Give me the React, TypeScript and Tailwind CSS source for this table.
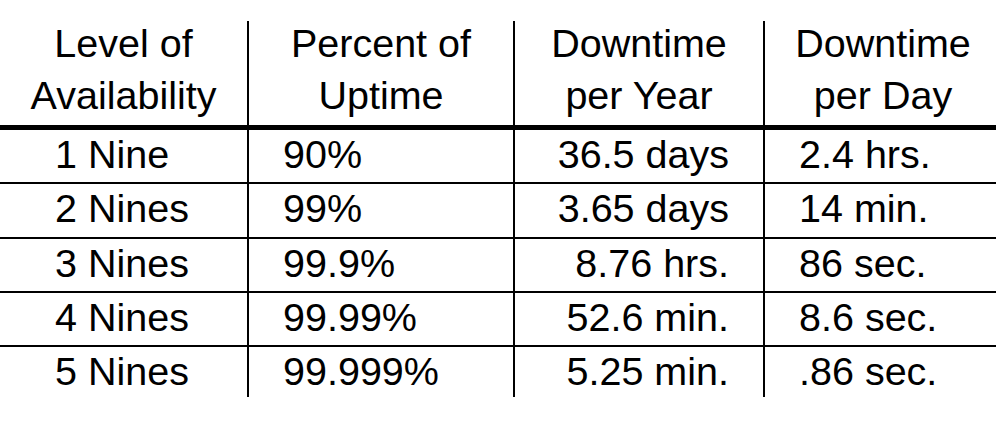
import React from "react";

const rows: [string, string, string, string][] = [
  ["1 Nine", "90%", "36.5 days", "2.4 hrs."],
  ["2 Nines", "99%", "3.65 days", "14 min."],
  ["3 Nines", "99.9%", "8.76 hrs.", "86 sec."],
  ["4 Nines", "99.99%", "52.6 min.", "8.6 sec."],
  ["5 Nines", "99.999%", "5.25 min.", ".86 sec."],
];

const heights = ["h-[52px]", "h-[53px]", "h-[52px]", "h-[52px]", "h-[50px]"];

export default function App() {
  return (
    <div
      className="w-[996px] h-[422px] bg-white text-black pt-[21px] text-[39.5px]"
      style={{ fontFamily: '"Liberation Sans", Arial, sans-serif' }}
    >
      {/* header */}
      <div className="grid grid-cols-[247px_266px_250px_1fr]">
        <div className="h-[104px] text-center">
          <div className="-mt-[4px] leading-[52px]">
            Level of
            <br />
            Availability
          </div>
        </div>
        <div className="h-[104px] text-center border-l-2 border-black">
          <div className="-mt-[4px] leading-[52px]">
            Percent of
            <br />
            Uptime
          </div>
        </div>
        <div className="h-[104px] text-center border-l-2 border-black">
          <div className="-mt-[4px] leading-[52px]">
            Downtime
            <br />
            per Year
          </div>
        </div>
        <div className="h-[104px] text-center border-l-2 border-black pl-[5px]">
          <div className="-mt-[4px] leading-[52px]">
            Downtime
            <br />
            per Day
          </div>
        </div>
      </div>
      <div className="grid grid-cols-[247px_266px_250px_1fr]">
        <div className="h-[5px] bg-black" />
        <div className="h-[5px] bg-black" />
        <div className="h-[5px] bg-black" />
        <div className="h-[5px] bg-black" />
      </div>
      {rows.map((r, i) => (
        <div
          key={i}
          className={`grid grid-cols-[247px_266px_250px_1fr] ${
            i < rows.length - 1 ? "border-b-2 border-black" : ""
          }`}
        >
          <div className={`${heights[i]} pl-[55px] leading-[48px] whitespace-nowrap`}>{r[0]}</div>
          <div className={`${heights[i]} pl-[34px] leading-[48px] border-l-2 border-black whitespace-nowrap`}>
            {r[1]}
          </div>
          <div className={`${heights[i]} pr-[34px] text-right leading-[48px] border-l-2 border-black whitespace-nowrap`}>
            {r[2]}
          </div>
          <div className={`${heights[i]} pl-[34px] leading-[48px] border-l-2 border-black whitespace-nowrap`}>
            {r[3]}
          </div>
        </div>
      ))}
    </div>
  );
}
